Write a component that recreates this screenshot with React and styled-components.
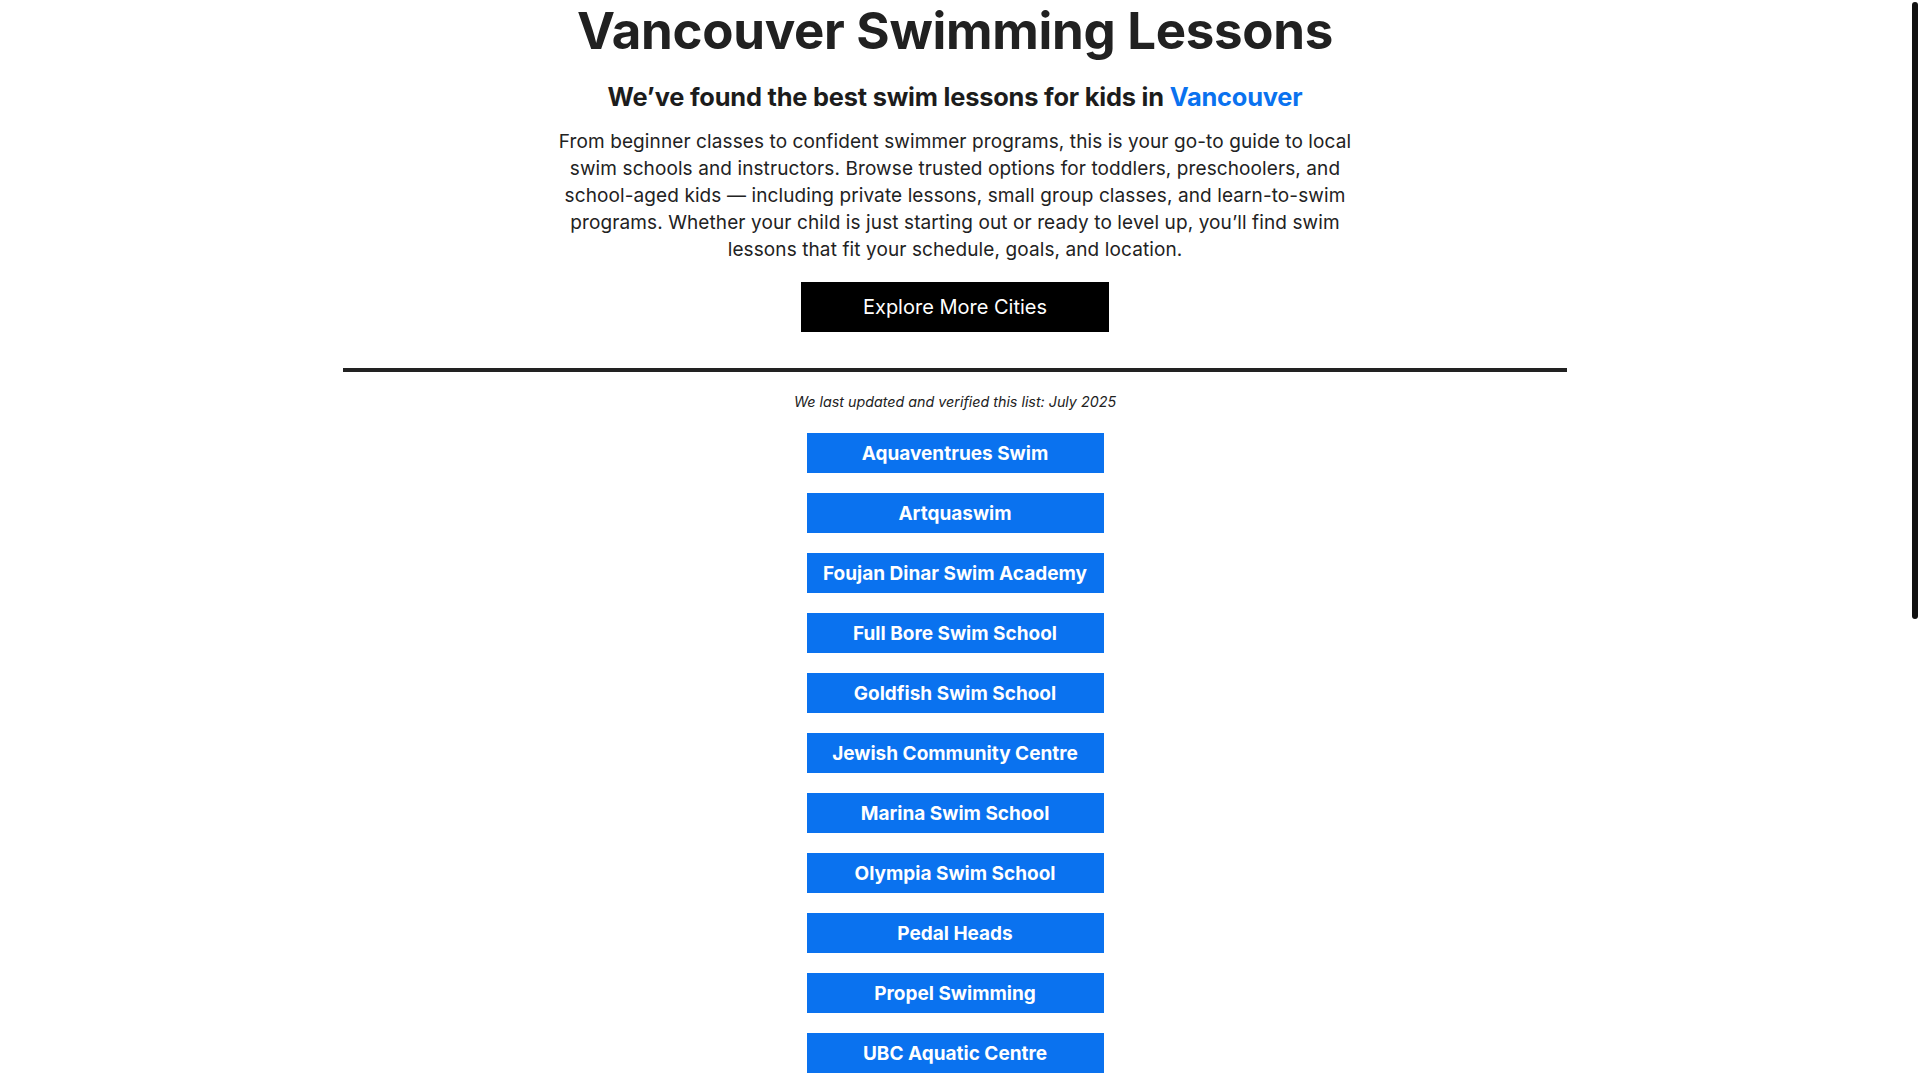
import React from 'react';
import styled, { createGlobalStyle } from 'styled-components';

const schools = [
    'Aquaventrues Swim',
    'Artquaswim',
    'Foujan Dinar Swim Academy',
    'Full Bore Swim School',
    'Goldfish Swim School',
    'Jewish Community Centre',
    'Marina Swim School',
    'Olympia Swim School',
    'Pedal Heads',
    'Propel Swimming',
    'UBC Aquatic Centre'
];

const GlobalStyle = createGlobalStyle`
    body {
        margin: 0;
        overflow: hidden;
        background: #fff;
        color: #222;
        font-family: Inter, "Open Sans", sans-serif;
    }
`;

const Frame = styled.div`
    display: flex;
    height: 100vh;
`;

const Page = styled.main`
    flex: 1;
    display: flex;
    flex-direction: column;
    align-items: center;
    overflow: hidden;
`;

// thin dark scroll rail on the right edge
const Rail = styled.div`
    width: 10px;
    padding: 2px 2px 0 2px;
    box-sizing: border-box;
`;

const Thumb = styled.div`
    width: 6px;
    border-radius: 3px;
    background: #111;
`;

const Title = styled.h1`
    margin: 0;
    font-size: 51px;
    line-height: 62px;
    font-weight: 700;
    color: #212121;
    letter-spacing: -0.3px;
`;

const Subtitle = styled.h2`
    margin: 17px 0 0;
    font-size: 25.4px;
    line-height: 36px;
    font-weight: 700;
    color: #1c1c1c;
    letter-spacing: -0.2px;
`;

const City = styled.span`
    color: #0a72ef;
`;

const Intro = styled.p`
    margin: 13px 0 0;
    width: 800px;
    text-align: center;
    font-size: 19px;
    line-height: 27px;
    letter-spacing: 0.1px;
    color: #222;
`;

const DarkButton = styled.a`
    display: flex;
    align-items: center;
    justify-content: center;
    flex-shrink: 0;
    margin-top: 19px;
    width: 308px;
    height: 50px;
    background: #000;
    color: #fff;
    font-size: 20px;
    text-decoration: none;
`;

const Rule = styled.hr`
    flex-shrink: 0;
    margin: 36px 0 0;
    width: 1224px;
    height: 4px;
    border: 0;
    background: #222;
`;

const Updated = styled.p`
    margin: 19px 0 0;
    font-size: 14.3px;
    line-height: 22px;
    font-style: italic;
    color: #222;
`;

const SchoolList = styled.div`
    display: flex;
    flex-direction: column;
    flex-shrink: 0;
    gap: 20px;
    margin-top: 20px;
`;

const SchoolButton = styled.a`
    display: flex;
    align-items: center;
    justify-content: center;
    flex-shrink: 0;
    width: 297px;
    height: 40px;
    background: #0a72ef;
    color: #fff;
    font-size: 19px;
    font-weight: 700;
    text-decoration: none;
`;

const App = () => {
    // thumb length follows how much of the page fits in the window
    const pageHeight = 1890;
    const thumbHeight = Math.round(window.innerHeight * window.innerHeight / pageHeight);

    return (
        <>
            <GlobalStyle />
            <Frame>
                <Page>
                    <Title>Vancouver Swimming Lessons</Title>
                    <Subtitle>We’ve found the best swim lessons for kids in <City>Vancouver</City></Subtitle>
                    <Intro>
                        From beginner classes to confident swimmer programs, this is your go-to guide to local
                        swim schools and instructors. Browse trusted options for toddlers, preschoolers, and
                        school-aged kids — including private lessons, small group classes, and learn-to-swim
                        programs. Whether your child is just starting out or ready to level up, you’ll find swim
                        lessons that fit your schedule, goals, and location.
                    </Intro>
                    <DarkButton href='#cities'>Explore More Cities</DarkButton>
                    <Rule />
                    <Updated>We last updated and verified this list: July 2025</Updated>
                    <SchoolList>
                        {schools.map(name => <SchoolButton key={name} href='#school'>{name}</SchoolButton>)}
                    </SchoolList>
                </Page>
                <Rail>
                    <Thumb style={{ height: thumbHeight }} />
                </Rail>
            </Frame>
        </>
    );
};

export default App;
